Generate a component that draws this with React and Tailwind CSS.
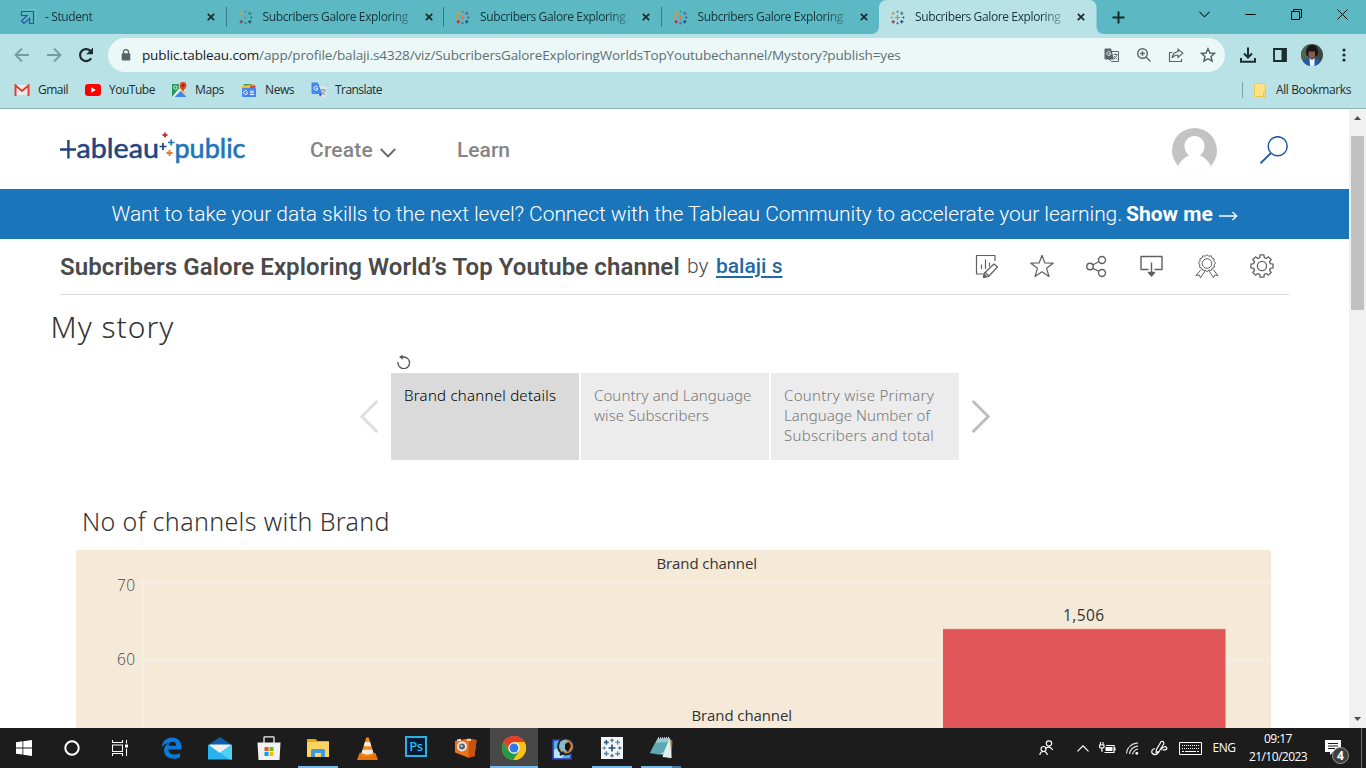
import React from "react";

const UI = "font-['Open_Sans','Noto_Sans',sans-serif]";

function TableauMark({ size = 15, mono = false, className = "" }) {
  const c = mono
    ? ["#35627f", "#5f8ca5", "#35627f", "#5f8ca5", "#35627f", "#5f8ca5", "#35627f", "#5f8ca5", "#1f4f70"]
    : ["#59879b", "#5b6591", "#3c6e93", "#1f457e", "#5b6591", "#c72035", "#eb912c", "#eb912c", "#e8762c"];
  const plus = (x, y, r, i, w = 1.6) => (
    <path key={i} d={`M${x - r} ${y}h${2 * r}M${x} ${y - r}v${2 * r}`} stroke={c[i]} strokeWidth={w} />
  );
  return (
    <svg width={size} height={size} viewBox="0 0 30 30" fill="none" className={className}>
      {plus(15, 3.5, 2.8, 0)}
      {plus(23.5, 6.5, 3.6, 1, 2)}
      {plus(26.7, 15, 2.8, 2)}
      {plus(23.5, 23.5, 3.6, 3, 2.2)}
      {plus(15, 26.5, 2.8, 4)}
      {plus(6.5, 23.5, 3.6, 5, 2.4)}
      {plus(3.3, 15, 2.8, 7)}
      {plus(6.5, 6.5, 3.6, 6, 2.4)}
      {plus(15, 15, 5.2, 8, 2.4)}
    </svg>
  );
}

function CloseX() {
  return (
    <svg width="8" height="8" viewBox="0 0 8 8" stroke="#1d2b30" strokeWidth="1.8">
      <path d="M0.8 0.8l6.4 6.4M7.2 0.8L0.8 7.2" />
    </svg>
  );
}

function Tab({ title, icon, active, sep }) {
  return (
    <div className="relative flex h-[34px] w-[217.5px] shrink-0 items-center">
      {active && (
        <svg className="absolute -left-2 top-0" width="234" height="34" viewBox="0 0 234 34">
          <path d="M0 34C5 34 8 31 8 26V8C8 3 11 0 16 0H218C223 0 225.500 3 225.500 8V26C225.500 31 228 34 234 34Z" fill="#b8e2e5" />
        </svg>
      )}
      <div className="relative flex w-full items-center pl-[11px]">
        <span className="flex w-[25px] shrink-0">{icon}</span>
        <span
          className={`w-[149px] overflow-hidden text-[12px] leading-4 tracking-[-0.38px] whitespace-nowrap text-[#16343a] ${UI} [mask-image:linear-gradient(to_right,#000_85%,rgba(0,0,0,0.25))]`}
        >
          {title}
        </span>
        <span className="ml-[13px] flex">
          <CloseX />
        </span>
      </div>
      {sep && <span className="h-5 w-px shrink-0 bg-[#3d7b84]" />}
    </div>
  );
}

function StudentIcon() {
  return (
    <svg width="16" height="16" viewBox="0 0 16 16" fill="none">
      <path d="M2 0.500h13.500V14" stroke="#5bc4f0" />
      <path d="M1.500 2.500h12v12h-4V9.500L4 14.500 1.500 12 7 6.500H1.500z" stroke="#27589b" strokeWidth="1.200" />
    </svg>
  );
}

function TabStrip() {
  const t = "Subcribers Galore Exploring";
  return (
    <div className="flex h-[34px] items-center bg-[#5cb8c2] pl-[9px]">
      <Tab title="- Student" icon={<StudentIcon />} sep />
      <Tab title={t} icon={<TableauMark />} sep />
      <Tab title={t} icon={<TableauMark />} sep />
      <Tab title={t} icon={<TableauMark />} />
      <Tab title={t} icon={<TableauMark />} active />
      <svg className="ml-[15.5px]" width="13" height="13" viewBox="0 0 13 13" stroke="#15282c" strokeWidth="2">
        <path d="M6.500 0.500v12M0.500 6.500h12" />
      </svg>
      <svg className="mb-[6px] ml-[74px]" width="11" height="7" viewBox="0 0 11 7" fill="none" stroke="#10292d" strokeWidth="1.100">
        <path d="M0.500 0.800l5 5 5-5" />
      </svg>
      <svg className="mb-[5px] ml-[35px]" width="11" height="11" viewBox="0 0 11 11" stroke="#000">
        <path d="M0.500 5.500h10" />
      </svg>
      <svg className="mb-[5px] ml-[35px]" width="11" height="11" viewBox="0 0 11 11" fill="none" stroke="#000">
        <path d="M0.500 2.500h8v8h-8zM2.500 2.500v-2h8v8h-2" />
      </svg>
      <svg className="mb-[5px] ml-[35px]" width="11" height="11" viewBox="0 0 11 11" stroke="#000">
        <path d="M0.500 0.500l10 10M10.500 0.500l-10 10" />
      </svg>
    </div>
  );
}

function Toolbar() {
  return (
    <div className="flex h-[42px] items-center bg-[#b8e2e5] pl-[14px]">
      <svg width="16" height="16" viewBox="0 0 16 16" fill="none" stroke="#789a9f" strokeWidth="1.800">
        <path d="M15 8H2M8 1.500L1.500 8 8 14.500" />
      </svg>
      <svg className="ml-4" width="16" height="16" viewBox="0 0 16 16" fill="none" stroke="#789a9f" strokeWidth="1.800">
        <path d="M1 8h13M8 1.500L14.500 8 8 14.500" />
      </svg>
      <svg className="ml-4" width="16" height="16" viewBox="0 0 16 16" fill="none">
        <path d="M13.200 11.200A6 6 0 1 1 12.200 3.700" stroke="#1c2b2f" strokeWidth="2.200" />
        <path d="M15 0.500v6.800H8.200z" fill="#1c2b2f" />
      </svg>
      <div className="ml-[14px] flex h-[34px] w-[1117px] shrink-0 items-center rounded-full bg-[#ecf8f8] pl-[13px]">
        <svg width="10" height="12" viewBox="0 0 10 12">
          <path d="M2.500 5V3a2.500 2.500 0 0 1 5 0v2" fill="none" stroke="#55666a" strokeWidth="1.300" />
          <rect x="0.700" y="4.300" width="8.600" height="7.200" rx="1" fill="#55666a" />
        </svg>
        <div className={`ml-[11px] w-[949px] text-[13.5px] tracking-[-0.14px] whitespace-nowrap text-[#5d6f73] ${UI}`}>
          <span className="text-[#141c1e]">public.tableau.com</span>/app/profile/balaji.s4328/viz/SubcribersGaloreExploringWorldsTopYoutubechannel/Mystory?publish=yes
        </div>
        <svg className="ml-[13px]" width="16" height="15" viewBox="0 0 16 15">
          <path d="M6 3.500h8.500V13.500H7.500L4 10" fill="none" stroke="#596569" />
          <path d="M1 0.500h6l3 11H1.500A1 1 0 0 1 0.500 10.500V1.500z" fill="#596569" />
          <path d="M7 5.500H4.800M6.200 4A2 2 0 1 0 6.700 6.200" fill="none" stroke="#ecf8f8" strokeWidth="0.900" />
          <path d="M9.500 6.500h4M11.500 5.500v1M13 6.500c-.4 2-1.600 3.500-3 4.500M10 8l3.200 3.500" fill="none" stroke="#596569" strokeWidth="0.900" />
        </svg>
        <svg className="ml-4" width="16" height="16" viewBox="0 0 16 16" fill="none" stroke="#596569" strokeWidth="1.400">
          <circle cx="6.500" cy="6.500" r="4.800" />
          <path d="M10 10l4.500 4.500M4.200 6.500h4.600M6.500 4.200v4.600" />
        </svg>
        <svg className="ml-4" width="16" height="15" viewBox="0 0 16 15" fill="none" stroke="#596569" strokeWidth="1.200">
          <path d="M4.500 4.500H1.500v9h12V11" />
          <path d="M10 1.200l4.800 4.100L10 9.400V7C7.500 7 5.500 8 4 10c.5-3 2.600-6 6-6.400z" />
        </svg>
        <svg className="ml-4" width="16" height="16" viewBox="0 0 16 16" fill="none" stroke="#4f5d61" strokeWidth="1.400">
          <path d="M8 1.700l1.900 4.300 4.600.4-3.500 3.100 1.100 4.600L8 11.700l-4.100 2.400 1.100-4.600L1.500 6.400l4.600-.4z" />
        </svg>
      </div>
      <svg className="ml-[15px]" width="16" height="16" viewBox="0 0 16 16" fill="none" stroke="#1c2b2f" strokeWidth="2">
        <path d="M8 0.500v9.500M4 6.500l4 4 4-4M1 11v3.800h14V11" />
      </svg>
      <svg className="ml-[17px]" width="14" height="14" viewBox="0 0 14 14">
        <path d="M1 1h12v12H1z" fill="none" stroke="#1c2b2f" strokeWidth="1.800" />
        <path d="M8.500 1H13v12H8.500z" fill="#1c2b2f" />
      </svg>
      <svg className="ml-[14px]" width="22" height="22" viewBox="0 0 22 22">
        <defs>
          <clipPath id="avatar"><circle cx="11" cy="11" r="11" /></clipPath>
        </defs>
        <g clipPath="url(#avatar)">
          <path d="M0 0h22v22H0z" fill="#3d4a42" />
          <path d="M0 0h7v22H0z" fill="#4f6655" />
          <path d="M5 9c0-5 2-8 6-8s6 3 6 8l-1 3H6z" fill="#17161b" />
          <path d="M7.500 7.500h6.500v4.500l-3.200 3-3.300-3z" fill="#8a5a48" />
          <path d="M1 22l2-6 5-2 3 2 3-2 4 2 3 6z" fill="#2459ae" />
          <path d="M8.500 14l2.500 2 2.500-2v8H9z" fill="#eef2f8" />
        </g>
      </svg>
      <svg className="ml-[19px]" width="4" height="14" viewBox="0 0 4 14" fill="#1c2b2f">
        <circle cx="2" cy="2" r="1.600" />
        <circle cx="2" cy="7" r="1.600" />
        <circle cx="2" cy="12" r="1.600" />
      </svg>
    </div>
  );
}

function Bookmarks() {
  const label = `text-[12px] whitespace-nowrap text-[#1e2d30] ${UI}`;
  return (
    <div className="flex h-[33px] items-center border-b border-[#8fb3b7] bg-[#b8e2e5] pb-[4px] pl-[14px]">
      <svg width="16" height="12" viewBox="0 0 16 12">
        <path d="M2 1h12v10H2z" fill="#e8eef0" />
        <path d="M1.500 12V1.500L8 7l6.500-5.500V12" fill="none" stroke="#e0402f" strokeWidth="2" />
      </svg>
      <span className={`ml-2 w-[39px] tracking-[-0.5px] ${label}`}>Gmail</span>
      <svg className="ml-2" width="16" height="12" viewBox="0 0 16 12">
        <rect width="16" height="12" rx="3" fill="#f00" />
        <path d="M6.300 3.300v5.400L10.800 6z" fill="#fff" />
      </svg>
      <span className={`ml-2 w-[54px] tracking-[-0.48px] ${label}`}>YouTube</span>
      <svg className="ml-2" width="16" height="16" viewBox="0 0 16 16">
        <path d="M1 2h13v13H1z" fill="#f0f3f4" />
        <path d="M1 2h7L1 9.500z" fill="#1e9f5b" />
        <path d="M1 9l6.500 6H1z" fill="#1e9f5b" />
        <path d="M2 15l7-7 6 6.200V15z" fill="#3f86f5" />
        <path d="M8 7l2-2 5 6v2z" fill="#f7c934" />
        <path d="M1 10V2h6.500l1 5L1 15z" fill="#1e9f5b" />
        <path d="M8 6.500l2 2L3.500 15H1z" fill="#e8eef0" />
        <circle cx="4.500" cy="5.500" r="1.700" fill="none" stroke="#e9f5ee" strokeWidth="0.900" />
        <path d="M12 0a3.400 3.400 0 0 1 3.400 3.400C15.400 6 12.700 7 12 10c-.7-3-3.400-4-3.400-6.600A3.400 3.400 0 0 1 12 0z" fill="#e0412f" />
        <circle cx="12" cy="3.500" r="1.200" fill="#8e2018" />
      </svg>
      <span className={`ml-2 w-[38px] tracking-[-0.4px] ${label}`}>Maps</span>
      <svg className="ml-2" width="16" height="14" viewBox="0 0 16 14">
        <path d="M3 1h8l2 4H3z" fill="#2a9d56" />
        <path d="M1 3l12-2 1 5H1z" fill="#f9b92b" />
        <path d="M9 2.500h5.500V7H9z" fill="#dd4535" />
        <rect x="1" y="5" width="14" height="9" rx="1" fill="#4285f4" />
        <path d="M6.500 9.700H5M6.300 8.300A2 2 0 1 0 6.600 10M9 8.200h4M9 9.800h3.500M9 11.500h4" fill="none" stroke="#fff" strokeWidth="0.900" />
      </svg>
      <span className={`ml-2 w-[38px] tracking-[-0.4px] ${label}`}>News</span>
      <svg className="ml-2" width="16" height="16" viewBox="0 0 16 16">
        <path d="M6 4h8.500a1 1 0 0 1 1 1v9.500a1 1 0 0 1-1 1H9z" fill="#dfe3e6" />
        <path d="M9.500 8h5M12 7v1M14 8c-.5 2-2 4-3 4.500M10.500 9.500l3.500 3.500" fill="none" stroke="#7d8a92" strokeWidth="0.900" />
        <path d="M1.500 0.500H7L11 12H1.500a1 1 0 0 1-1-1V1.500a1 1 0 0 1 1-1z" fill="#4285f4" />
        <path d="M8 12h3l-2 3z" fill="#2a56c6" />
        <path d="M7 6.300H5M6.500 4.700A2.100 2.100 0 1 0 7 7" fill="none" stroke="#fff" />
      </svg>
      <span className={`ml-2 w-[60px] tracking-[-0.55px] ${label}`}>Translate</span>
      <span className="ml-auto h-4 w-px bg-[#7fa3a8]" />
      <svg className="ml-[11px]" width="12" height="14" viewBox="0 0 12 14">
        <path d="M0.500 0.500h10.500v13H0.500z" fill="#ffe28a" stroke="#f3c84b" />
        <path d="M9.500 9.500h2v4h-2z" fill="#ffe28a" stroke="#e9b93c" strokeWidth="0.800" />
      </svg>
      <span className={`mr-[14px] ml-[10px] w-[76px] tracking-[-0.38px] ${label}`}>All Bookmarks</span>
    </div>
  );
}

const ROBOTO = "font-['Roboto','Liberation_Sans',sans-serif]";

function SiteHeader() {
  return (
    <div className={`flex h-[80px] items-center bg-white pt-[3px] pl-[60px] ${ROBOTO}`}>
      <svg width="188" height="40" viewBox="0 0 188 40" aria-label="tableau public">
        <path d="M0 18.500h16M8.400 9v18.500" stroke="#1f447e" strokeWidth="2.400" />
        <text x="16.500" y="27" textLength="82.500" lengthAdjust="spacingAndGlyphs" fill="#1f447e" stroke="#1f447e" strokeWidth="0.500" fontFamily="Lato, sans-serif" fontSize="27">ableau</text>
        <text x="114.500" y="27" textLength="71" lengthAdjust="spacingAndGlyphs" fill="#1b75bc" stroke="#1b75bc" strokeWidth="0.600" fontFamily="Lato, sans-serif" fontSize="27">public</text>
        <path d="M99.500 15.500h7M103 12v7" stroke="#1f447e" strokeWidth="1.700" />
        <path d="M102.500 4h5M105 1.500v5" stroke="#c8324a" strokeWidth="1.900" />
        <path d="M108 11.500h6.500M111.200 8.500v6" stroke="#1b75bc" strokeWidth="1.700" />
        <path d="M106.500 22h6M109.500 19v6" stroke="#e8762c" strokeWidth="1.900" />
      </svg>
      <span className="ml-[62px] w-[64px] text-[21px] font-medium tracking-[0.2px] text-[#858585]">Create</span>
      <svg className="mt-1 ml-[6px]" width="16" height="10" viewBox="0 0 16 10" fill="none" stroke="#666" strokeWidth="1.800">
        <path d="M0.800 1l7.200 7.400L15.200 1" />
      </svg>
      <span className="ml-[61px] text-[21px] font-medium text-[#858585]">Learn</span>
      <svg className="mr-[43px] mb-px ml-auto" width="45" height="45" viewBox="0 0 45 45">
        <defs>
          <clipPath id="user"><circle cx="22.500" cy="22.500" r="22.500" /></clipPath>
        </defs>
        <g clipPath="url(#user)">
          <path d="M0 0h45v45H0z" fill="#c3c3c3" />
          <path d="M22.500 8a10 10 0 0 1 10 10.500c0 3.500-2 7-4.500 9 5.500 2 9 6.500 11.500 12V45h-34v-5.500c2.500-5.500 6-10 11.500-12-2.500-2-4.500-5.500-4.500-9A10 10 0 0 1 22.500 8z" fill="#fff" />
          <path d="M0 40.500h45V45H0z" fill="#fff" />
        </g>
      </svg>
      <svg className="mr-[61px] mb-px" width="28" height="28" viewBox="0 0 28 28" fill="none" stroke="#1f57a4" strokeWidth="1.500">
        <circle cx="17.700" cy="10.200" r="9.500" />
        <path d="M11 17L0.500 27.300" strokeWidth="1.800" />
      </svg>
    </div>
  );
}

function Banner() {
  return (
    <div className={`flex h-[50px] items-center bg-[#1b75bb] pt-[2px] pl-[111.5px] text-[21px] whitespace-nowrap text-white ${ROBOTO}`}>
      <span className="w-[1014.5px] font-light tracking-[-0.065px]">
        Want to take your data skills to the next level? Connect with the Tableau Community to accelerate your learning.
      </span>
      <span className="font-bold">Show me</span>
      <svg className="mt-px ml-[6px]" width="19" height="10" viewBox="0 0 19 10" fill="none" stroke="#fff" strokeWidth="1.300">
        <path d="M0 5h17.500M13.500 1l4.300 4-4.300 4" />
      </svg>
    </div>
  );
}

const gear = (() => {
  const pts = [];
  for (let i = 0; i < 8; i++) {
    const a = (i * Math.PI) / 4;
    [[-0.27, 8.6], [-0.17, 11.2], [0.17, 11.2], [0.27, 8.6]].forEach(([d, r]) => {
      pts.push(`${(12 + r * Math.sin(a + d)).toFixed(2)} ${(12 - r * Math.cos(a + d)).toFixed(2)}`);
    });
  }
  return `M${pts.join("L")}Z`;
})();

function Actions() {
  const p = { width: 24, height: 24, viewBox: "0 0 24 24", fill: "none", stroke: "#606060", strokeWidth: 1.2, strokeLinejoin: "round" };
  return (
    <div className="mr-[75.5px] mb-px ml-auto flex items-center gap-[31px]">
      <svg {...p}>
        <path d="M20 7V1.500H1.500v18.500H10M6.500 10.500V15M10.500 5.500V15M14.500 8.500v4" />
        <path d="M9.500 19l9.500-9 3.500 3-9 9.500-4.500 1z M10.500 18.500l3 3.500" />
        <path d="M8.300 23.300l1-3 2 2z" fill="#606060" />
      </svg>
      <svg {...p}>
        <path d="M12 1.300l2.800 7.700 8.400.2-6.700 5 2.500 8.300-7-4.800-7 4.800 2.500-8.300-6.700-5 8.400-.2z" />
      </svg>
      <svg {...p}>
        <circle cx="5" cy="12.500" r="3.200" strokeWidth="1.400" />
        <circle cx="17" cy="6" r="3.500" strokeWidth="1.400" />
        <circle cx="17" cy="19" r="3.500" strokeWidth="1.400" />
        <path d="M7.800 11l6.200-3.500M7.800 14.200l6.300 3.200" />
      </svg>
      <svg {...p} strokeWidth="1.400">
        <path d="M8.500 15.500H1v-13h21v13h-7.500M11.500 8.500V20" />
        <path d="M8.500 18.500h6L11.500 22z" fill="#606060" />
      </svg>
      <svg {...p} strokeWidth="1">
        <path d="M12 .8l1.800 1.400 2.300-.4.8 2.200 2.200.8-.2 2.300 1.600 1.900-1.400 1.900.3 2.400-2.200.9-.9 2.100-2.300-.2-2 1.500-2-1.500-2.300.2-.9-2.100-2.200-.9.3-2.400L3.500 9l1.600-1.900-.2-2.300L7.100 4l.8-2.200 2.300.4z" />
        <circle cx="12" cy="9.500" r="4.800" />
        <path d="M6 15.500L1 21.500l3.500-.5.900 2.900L10 17M18 15.500l5 6-3.500-.5-.9 2.900L14 17" />
      </svg>
      <svg {...p} strokeWidth="1.300">
        <path d={gear} />
        <circle cx="12" cy="12" r="4.600" />
      </svg>
    </div>
  );
}

function TitleRow() {
  return (
    <div className={`flex h-[55px] items-center pl-[60px] whitespace-nowrap ${ROBOTO}`}>
      <h1 className="w-[627px] text-[24px] font-semibold tracking-[0.09px] text-[#4a4a4a]">
        Subcribers Galore Exploring World’s Top Youtube channel
      </h1>
      <span className="mt-px w-[29px] text-[21px] font-light text-[#4a4a4a]">by</span>
      <a className="mt-px text-[21px] font-medium text-[#1f69a6] underline decoration-[1.5px] underline-offset-[3px]">balaji s</a>
      <Actions />
    </div>
  );
}

function StoryNav() {
  const text = "font-['Noto_Sans','Open_Sans',sans-serif] font-light text-[15px] leading-[20px] whitespace-nowrap";
  return (
    <div className="pl-[360px]">
      <svg className="ml-[37px]" width="14" height="14" viewBox="0 0 14 14" fill="none" stroke="#555" strokeWidth="1.300">
        <path d="M1 7A5.800 5.800 0 1 0 6.800 2H3.500" />
        <path d="M5.500 0v4.200L2.500 2z" fill="#555" strokeWidth="0.500" />
      </svg>
      <div className="mt-[4px] flex items-center">
        <svg className="mb-px" width="19" height="33" viewBox="0 0 19 33" fill="none" stroke="#dedede" strokeWidth="3" strokeLinecap="round">
          <path d="M16.500 1.800L1.800 16.500l14.700 14.700" />
        </svg>
        <div className="ml-3 flex gap-[2px]">
          <div className={`h-[87px] w-[188px] bg-[#dadada] pt-[12px] pl-[13px] tracking-[0.25px] text-black ${text}`}>Brand channel details</div>
          <div className={`h-[87px] w-[188px] bg-[#ececec] pt-[12px] pl-[13px] tracking-[0.08px] text-[#787878] ${text}`}>
            Country and Language
            <br />
            wise Subscribers
          </div>
          <div className={`h-[87px] w-[188px] bg-[#ececec] pt-[12px] pl-[13px] tracking-[0.28px] text-[#787878] ${text}`}>
            Country wise Primary
            <br />
            <span className="tracking-[0.02px]">Language Number of</span>
            <br />
            Subscribers and total
          </div>
        </div>
        <svg className="mb-px ml-3" width="19" height="33" viewBox="0 0 19 33" fill="none" stroke="#bdbdbd" strokeWidth="3" strokeLinecap="round">
          <path d="M2.500 1.800l14.700 14.700L2.500 31.200" />
        </svg>
      </div>
    </div>
  );
}

function Chart() {
  const f = "Open Sans, Noto Sans, sans-serif";
  return (
    <svg className="ml-[76px] block" width="1195" height="178" viewBox="0 0 1195 178">
      <path d="M0 0h1195v178H0z" fill="#f5e9d8" />
      <path d="M62 33h1133M62 110.500h1133M67.500 26v152" stroke="#f3f0eb" strokeWidth="1.500" />
      <path d="M867 79h282.500v99H867z" fill="#e15759" />
      <path d="M867 79h282.500v99" fill="none" stroke="#ee9a94" strokeWidth="0.600" />
      <text x="580.500" y="19" textLength="100.500" fontFamily={f} fontSize="15" fill="#333">Brand channel</text>
      <text x="615.500" y="171" textLength="100.500" fontFamily={f} fontSize="15" fill="#333">Brand channel</text>
      <text x="987" y="71" textLength="41" fontFamily={f} fontSize="15.500" fill="#333">1,506</text>
      <text x="41" y="41" textLength="18" fontFamily={f} fontSize="15.500" fontWeight="300" fill="#444">70</text>
      <text x="41" y="115" textLength="18" fontFamily={f} fontSize="15.500" fontWeight="300" fill="#444">60</text>
    </svg>
  );
}

function Scrollbar() {
  return (
    <div className="flex w-[17px] flex-col items-center bg-[#f1f1f1]">
      <svg className="mt-[7px]" width="7" height="4" viewBox="0 0 7 4"><path d="M0 4L3.500 0 7 4z" fill="#505050" /></svg>
      <div className="mt-[16px] h-[174px] w-[13px] bg-[#c1c1c1]" />
      <svg className="mt-auto mb-[7px]" width="7" height="4" viewBox="0 0 7 4"><path d="M0 0l3.500 4L7 0z" fill="#505050" /></svg>
    </div>
  );
}

function TaskItem({ children, line = "", active }) {
  return (
    <div className={`flex h-10 w-12 shrink-0 flex-col items-center ${active ? "bg-[#484848]" : ""}`}>
      <div className="flex h-[38px] items-center justify-center pt-[2px]">{children}</div>
      {line === "full" && <div className="h-[2px] w-12 bg-[#76b9ed]" />}
      {line === "short" && <div className="h-[2px] w-10 bg-[#76b9ed]" />}
      {line === "multi" && (
        <div className="flex h-[2px] w-10">
          <div className="w-[31px] bg-[#76b9ed]" />
          <div className="w-[9px] bg-[#4b7ca3]" />
        </div>
      )}
    </div>
  );
}

function Taskbar() {
  const tray = "flex h-10 shrink-0 items-center justify-center";
  return (
    <div className="flex h-10 items-center bg-[#1c1c1c]">
      <TaskItem>
        <svg width="16" height="16" viewBox="0 0 16 16" fill="#fff"><path d="M0 2.200l6.500-.9v6.200H0zM7.300 1.200L16 0v7.500H7.300zM0 8.400h6.500v6.200L0 13.700zM7.300 8.400H16V16l-8.700-1.200z" /></svg>
      </TaskItem>
      <TaskItem>
        <svg width="16" height="16" viewBox="0 0 16 16" fill="none" stroke="#fff" strokeWidth="2"><circle cx="8" cy="8" r="6.700" /></svg>
      </TaskItem>
      <TaskItem>
        <svg width="16" height="16" viewBox="0 0 16 16" fill="none" stroke="#fff" strokeWidth="1.100">
          <path d="M0.500 0v2.500h10V0M0.500 5h10v6.500h-10zM0.500 16v-2.500h10V16M14.500 0v3.500M14.500 8.500V16" />
          <path d="M13 4.500h3v3h-3z" fill="#fff" stroke="none" />
        </svg>
      </TaskItem>
      <div className="ml-[3px] flex gap-px">
        <TaskItem>
          <svg width="21" height="22" viewBox="0 0 21 22">
            <path d="M0.800 10C1.500 4 5.500 0.500 11 0.500c6 0 9.500 4 9.500 9.500v2.500H7.300c.2 3.500 3 5 6 5 2 0 4-.5 5.700-1.500v4.200c-2 1-4 1.500-6.500 1.500C7 21.700 3 18.500 3 13.500c0-3.500 1.800-6 5-7.500C5.500 6.200 2.500 7.700.8 10zm6.700-1.300h7.700c0-2.500-1.300-4-3.700-4-2.200 0-3.700 1.500-4 4z" fill="#0a79d8" />
          </svg>
        </TaskItem>
        <TaskItem>
          <svg width="24" height="23" viewBox="0 0 24 23">
            <path d="M0 8L12 0l12 8v2H0z" fill="#0d5db0" />
            <path d="M1.500 7.500h21V16h-21z" fill="#f0f0f0" />
            <path d="M0 7.500l12 8.500 12-8.500v15H0z" fill="#28b3ee" />
            <path d="M24 7.500L12 15.500l9.500 7H24z" fill="#4fd0f7" />
          </svg>
        </TaskItem>
        <TaskItem>
          <svg width="24" height="24" viewBox="0 0 24 24">
            <path d="M7 7V1.500q0-.7.700-.7h8.600q.7 0 .7.700V7" fill="none" stroke="#f2f2f2" strokeWidth="1.300" />
            <path d="M0.500 6.500h23L22.500 24h-21z" fill="#f2f2f2" />
            <path d="M7.500 11h4v4h-4z" fill="#f25022" /><path d="M12.500 11h4v4h-4z" fill="#7fba00" />
            <path d="M7.500 16h4v4h-4z" fill="#00a4ef" /><path d="M12.500 16h4v4h-4z" fill="#ffb900" />
          </svg>
        </TaskItem>
        <TaskItem line="short">
          <svg width="22" height="19" viewBox="0 0 22 19">
            <path d="M0 0h8.500l2 2H22v15H0z" fill="#e8a915" />
            <path d="M0 3h22v15H0z" fill="#fcd462" />
            <path d="M4 18v-6.500q0-1.500 1.500-1.500h11q1.500 0 1.500 1.500V18h-4v-4H8v4z" fill="#3d9be0" />
          </svg>
        </TaskItem>
        <TaskItem>
          <svg width="21" height="23" viewBox="0 0 21 23">
            <path d="M2.500 16h16l2.500 7H0z" fill="#e87408" />
            <path d="M9.300 0.500h2.400L17 17.500q-6.500 3.500-13 0z" fill="#f58c12" />
            <path d="M8 5h5l1.300 4.200H6.700zM5.600 12.700h9.800l1 3.300q-6 2.800-12 0z" fill="#ececec" />
          </svg>
        </TaskItem>
        <TaskItem>
          <div className="mb-[3px] flex h-[21px] w-[22px] items-center justify-center border-2 border-[#2cb0e0] bg-[#071a33] font-['Open_Sans',sans-serif] text-[13px] leading-none font-semibold tracking-[-0.4px] text-[#31b5ea]">Ps</div>
        </TaskItem>
        <TaskItem>
          <svg width="23" height="20" viewBox="0 0 23 20">
            <path d="M1 3l14-2.500L22.500 2 20.500 18l-6 1.800L1 14.500z" fill="#ed7218" />
            <path d="M15 .7l7.500 1.500-2 16-6 1.500z" fill="#c9520c" />
            <path d="M3 1.500l4-.8v2L3 3.500zM13 1h4v2h-4z" fill="#e7d9ce" />
            <circle cx="8" cy="8.500" r="5" fill="#e9e6e3" /><circle cx="8" cy="8.500" r="3" fill="#5b6066" /><circle cx="7.500" cy="8" r="1.200" fill="#b6c8da" />
          </svg>
        </TaskItem>
        <TaskItem line="full" active>
          <svg width="24" height="24" viewBox="0 0 24 24">
            <circle cx="12" cy="12" r="12" fill="#fbc116" />
            <path d="M1.600 6A12 12 0 0 1 22.400 6H12L7 15z" fill="#e33b2e" />
            <path d="M1.600 6l5.200 9L12 18l-1.500 5.900A12 12 0 0 1 1.600 6z" fill="#229a48" />
            <path d="M6.800 15L12 18l5.200-3-6 9A12 12 0 0 1 6 22z" fill="#229a48" />
            <path d="M17.200 15L12 24A12 12 0 0 0 22.400 6H12z" fill="#fbc116" />
            <circle cx="12" cy="12" r="5.700" fill="#fff" /><circle cx="12" cy="12" r="4.500" fill="#2f79e8" />
          </svg>
        </TaskItem>
        <TaskItem>
          <svg width="23" height="23" viewBox="0 0 23 23">
            <path d="M1 3h18v19H1z" fill="#4fb4dc" stroke="#3638b8" strokeWidth="1.600" />
            <path d="M2 13l6-3 4 8-2 3H2z" fill="#b9e6f2" />
            <circle cx="14" cy="9.500" r="8" fill="#c5863f" stroke="#1b2330" strokeWidth="1.800" />
            <path d="M8 5q4-3 7-2l-2 5 2 5-3 3q-5-3-4-11z" fill="#88bccd" />
            <path d="M13 7l4-2 2 4-3 6-3-3z" fill="#1c1410" />
            <path d="M8 18l4-3" stroke="#1b2330" strokeWidth="2.500" />
          </svg>
        </TaskItem>
        <TaskItem line="short">
          <div className="flex h-[22px] w-[22px] items-center justify-center bg-[#f3f4f5]">
            <TableauMark size={20} mono />
          </div>
        </TaskItem>
        <TaskItem line="multi">
          <svg width="23" height="22" viewBox="0 0 23 22">
            <path d="M20 2l2.500 2-1 17-3 .5z" fill="#a3772c" />
            <path d="M7.500 1.500L20 1l-5 17L0 16z" fill="#8fcdd2" />
            <path d="M5 6l13-1-3.500 9-6 4L0 16z" fill="#4a99a3" opacity="0.700" />
            <path d="M20 1l1.500 20-9-1 1.500-5z" fill="#e3edee" />
            <path d="M8 1l12-.2" stroke="#d7dede" strokeWidth="1.500" strokeDasharray="1 1" />
          </svg>
        </TaskItem>
      </div>
      <div className="ml-auto flex">
        <div className={`w-8 ${tray}`}>
          <svg width="15" height="16" viewBox="0 0 15 16" fill="none" stroke="#fff" strokeWidth="1.200">
            <circle cx="10" cy="3.500" r="2.700" /><path d="M6.500 8.500q3.500-3.500 7.300 1.500" />
            <circle cx="4.500" cy="9" r="2.500" /><path d="M0.800 15q.5-3.500 3.700-3.500T8.300 15" />
          </svg>
        </div>
        <div className={`ml-[9px] w-6 ${tray}`}>
          <svg width="12" height="7" viewBox="0 0 12 7" fill="none" stroke="#fff" strokeWidth="1.200"><path d="M0.500 6.300L6 .8l5.500 5.500" /></svg>
        </div>
        <div className={`w-[25px] ${tray}`}>
          <svg width="17" height="13" viewBox="0 0 17 13" fill="none" stroke="#fff" strokeWidth="1.100">
            <path d="M7 3.500h8v7H5.500M16 5.500v3" /><path d="M6.500 5h7v4h-7z" fill="#fff" stroke="none" />
            <path d="M1.500 0v2.500M4 0v2.500M0.500 3h4.500v2.300q-2.200 1.700-4.500 0zM2.800 6v3h1.200" />
          </svg>
        </div>
        <div className={`w-[25px] ${tray}`}>
          <svg width="13" height="13" viewBox="0 0 13 13" fill="none" stroke="#d8d8d8" strokeWidth="1.200">
            <path d="M0.500 11.500Q1.500 2 12 .8M3.500 12Q4.500 5 12 3.800M6.500 12.300Q7.500 8 12 7" /><circle cx="10.800" cy="11.300" r="1.400" fill="#fff" stroke="none" />
          </svg>
        </div>
        <div className={`w-7 ${tray}`}>
          <svg width="17" height="16" viewBox="0 0 17 16" fill="none" stroke="#fff" strokeWidth="1.200">
            <path d="M4 8.500Q0 9.500 1 13q3 3.500 6.500-.5L13 3.500Q12.500.5 10.200 1.500L5.500 9.500l-.5 3 2.500-1M10 9.500q4-4.500 5.500-2T11.500 10" />
          </svg>
        </div>
        <div className={`w-[34px] ${tray}`}>
          <svg width="23" height="13" viewBox="0 0 23 13" fill="none" stroke="#fff">
            <path d="M0.500 0.500h22v12h-22z" /><path d="M3 3.500h17M3 6.500h17" strokeDasharray="1 1" /><path d="M3 9.500h2M6 9.500h11M18 9.500h2" />
          </svg>
        </div>
        <div className={`w-[34px] text-[12px] tracking-[-0.4px] text-white ${UI} ${tray}`}>ENG</div>
        <div className={`w-[74px] flex-col text-[12px] leading-[18px] tracking-[-0.55px] text-white ${UI} ${tray}`}>
          <span>09:17</span>
          <span>21/10/2023</span>
        </div>
        <div className={`relative w-[43px] ${tray}`}>
          <svg className="mr-[8px] mb-px" width="16" height="15" viewBox="0 0 16 15">
            <path d="M0 0h16v12H8l-3 3v-3H0z" fill="#fff" /><path d="M3 3.500h10M3 6h10M3 8.500h7" stroke="#1c1c1c" />
          </svg>
          <span className={`absolute top-[19px] left-[17px] flex h-[17px] w-[17px] items-center justify-center rounded-full border border-[#9a9a9a] bg-[#3f3f3f] text-[12px] leading-none font-bold text-white ${UI}`}>4</span>
        </div>
        <div className="mr-1 ml-[3px] h-10 w-px bg-[#6a6a6a]" />
      </div>
    </div>
  );
}

export default function App() {
  return (
    <div className="flex h-[768px] w-[1366px] flex-col overflow-hidden bg-white">
      <TabStrip />
      <Toolbar />
      <Bookmarks />
      <div className="flex h-[619px]">
        <main className="w-[1349px] overflow-hidden">
          <SiteHeader />
          <Banner />
          <TitleRow />
          <div className="mx-[60px] h-px bg-[#d9d9d9]" />
          <h2 className="mt-[12px] h-10 pl-[50.5px] font-['Noto_Sans','Open_Sans',sans-serif] text-[30px] leading-10 font-light tracking-[1px] text-[#333]">My story</h2>
          <div className="h-[8px]" />
          <StoryNav />
          <h3 className="mt-[41px] mb-[9px] h-10 pl-[82px] font-['Noto_Sans','Open_Sans',sans-serif] text-[25px] leading-10 font-light tracking-[0.36px] text-[#333]">No of channels with Brand</h3>
          <Chart />
        </main>
        <Scrollbar />
      </div>
      <Taskbar />
    </div>
  );
}
